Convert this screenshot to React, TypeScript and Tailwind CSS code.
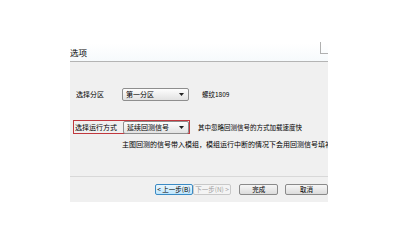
import React from "react";

const font = { fontFamily: '"Noto Sans CJK SC", "Noto Sans", sans-serif' };

function Dropdown({ text, w }: { text: string; w: string }) {
  return (
    <div
      className={`${w} h-[13px] flex items-center justify-between border border-[#8e8e8e] rounded-[2px] bg-gradient-to-b from-[#fdfdfd] to-[#e2e2e2] pl-[3px] pr-[4px]`}
    >
      <span className="text-[7px] leading-none text-black">{text}</span>
      <svg width="5" height="3" viewBox="0 0 5 3">
        <path d="M0 0 L5 0 L2.5 3 Z" fill="#222" />
      </svg>
    </div>
  );
}

export default function App() {
  return (
    <div className="w-[400px] h-[250px] bg-white overflow-hidden relative" style={font}>
      <div className="pt-[43px] pl-[70px]">
        <div className="w-[258px] overflow-hidden">
          {/* title */}
          <div className="h-[19px] bg-gradient-to-b from-[#ffffff] to-[#f6fafc] border-b border-[#b4b4b4] flex items-center">
            <span className="text-[8.5px] leading-none text-black">选项</span>
          </div>
          {/* body */}
          <div className="bg-[#f0f0f0] h-[140px] flex flex-col">
            <div className="mt-[26px] h-[13px] flex items-center pl-[6px] whitespace-nowrap">
              <span className="w-[46px] text-[7px] leading-none text-black">选择分区</span>
              <Dropdown text="第一分区" w="w-[67px]" />
              <span className="ml-[13px] text-[6.5px] leading-none text-black">螺纹1809</span>
            </div>
            <div className="mt-[19px] h-[14px] flex items-center pl-[3px] whitespace-nowrap">
              <div className="w-[117px] h-[14px] border border-[#c0383e] flex items-center pl-[1px]">
                <span className="w-[48px] text-[7px] leading-none text-black">选择运行方式</span>
                <Dropdown text="延续回测信号" w="w-[66px]" />
              </div>
              <span className="ml-[8px] text-[6.5px] leading-none text-black">
                其中忽略回测信号的方式加载速度快
              </span>
            </div>
            <div className="mt-[7px] pl-[52px] whitespace-nowrap text-[7px] leading-none text-black">
              主图回测的信号带入模组，模组运行中断的情况下会用回测信号填补
            </div>
            <div className="mt-auto h-[26px] border-t border-[#d8d8d8] flex items-start pt-[7px] pl-[85px] whitespace-nowrap">
              <div className="w-[42px] h-[11px] border border-[#3c8bc4] rounded-[2px] bg-gradient-to-b from-[#eaf6fd] to-[#bee6fd] flex items-center justify-center text-[6.5px] leading-none text-black">
                &lt; 上一步(B)
              </div>
              <div className="w-[43px] h-[11px] border border-[#c8c8c8] rounded-[2px] bg-[#f4f4f4] flex items-center justify-center text-[6.5px] leading-none text-[#a0a0a0]">
                下一步(N) &gt;
              </div>
              <div className="ml-[8px] w-[43px] h-[11px] border border-[#8a8a8a] rounded-[2px] bg-gradient-to-b from-[#f6f6f6] to-[#dcdcdc] flex items-center justify-center text-[6.5px] leading-none text-black">
                完成
              </div>
              <div className="ml-[7px] w-[43px] h-[11px] shrink-0 border border-[#8a8a8a] rounded-[2px] bg-gradient-to-b from-[#f6f6f6] to-[#dcdcdc] flex items-center justify-center text-[6.5px] leading-none text-black">
                取消
              </div>
            </div>
          </div>
        </div>
      </div>
      <div className="absolute left-[320px] top-[42px] w-[8px] h-[12px] border-l border-b border-[#b0b0b0]" />
    </div>
  );
}
